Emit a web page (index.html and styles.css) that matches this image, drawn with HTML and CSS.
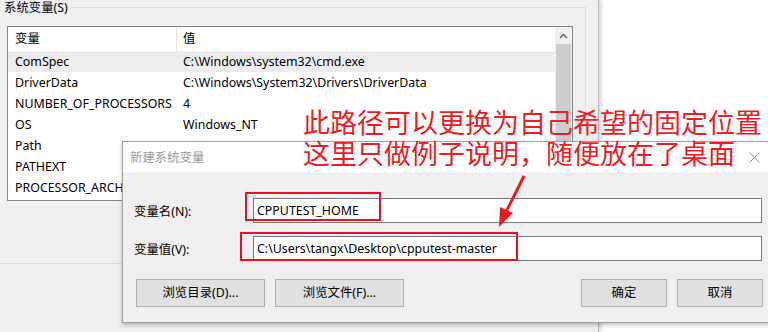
FILE: index.html
```html
<!DOCTYPE html>
<html lang="zh-CN">
<head>
<meta charset="utf-8">
<title>系统变量</title>
<link rel="stylesheet" href="styles.css">
</head>
<body>
<div class="screen">
  <div class="win">
    <div class="group">
      <div class="legend">系统变量(S)</div>
      <div class="list">
        <div class="table">
          <div class="row head"><div class="c1">变量</div><div class="sep"></div><div class="c2">值</div></div>
          <div class="row sel"><div class="c1">ComSpec</div><div class="c2 v">C:\Windows\system32\cmd.exe</div></div>
          <div class="row"><div class="c1">DriverData</div><div class="c2 v">C:\Windows\System32\Drivers\DriverData</div></div>
          <div class="row"><div class="c1">NUMBER_OF_PROCESSORS</div><div class="c2 v">4</div></div>
          <div class="row"><div class="c1">OS</div><div class="c2 v">Windows_NT</div></div>
          <div class="row"><div class="c1">Path</div><div class="c2 v"></div></div>
          <div class="row"><div class="c1">PATHEXT</div><div class="c2 v"></div></div>
          <div class="row"><div class="c1">PROCESSOR_ARCHITECTURE</div><div class="c2 v"></div></div>
        </div>
        <div class="scroll">
          <div class="sb-up"><svg width="9" height="6" viewBox="0 0 9 6"><path d="M1 5 L4.5 1.5 L8 5" fill="none" stroke="#606060" stroke-width="1.4"/></svg></div>
          <div class="sb-thumb"></div>
        </div>
      </div>
    </div>
  </div>

  <div class="dialog">
    <div class="titlebar">
      <span class="title">新建系统变量</span>
      <svg class="close" width="11" height="11" viewBox="0 0 11 11"><path d="M0.5 0.5 L10.5 10.5 M10.5 0.5 L0.5 10.5" stroke="#8a8a8a" stroke-width="1"/></svg>
    </div>
    <div class="dbody">
      <div class="frow"><label class="flabel">变量名(N):</label><div class="input">CPPUTEST_HOME</div></div>
      <div class="frow"><label class="flabel">变量值(V):</label><div class="input">C:\Users\tangx\Desktop\cpputest-master</div></div>
      <div class="btns">
        <div class="bgroup"><div class="btn wide">浏览目录(D)...</div><div class="btn wide">浏览文件(F)...</div></div>
        <div class="bgroup"><div class="btn">确定</div><div class="btn">取消</div></div>
      </div>
      <div class="grip"></div>
    </div>
  </div>

  <div class="mark mark1"></div>
  <div class="mark mark2"></div>

  <div class="note">此路径可以更换为自己希望的固定位置<br>这里只做例子说明，随便放在了桌面</div>

  <svg class="arrow" width="768" height="332" viewBox="0 0 768 332">
    <line x1="524" y1="176" x2="505" y2="214" stroke="#ec1c24" stroke-width="3"/>
    <polygon points="499,227 513,213 500,207" fill="#ec1c24"/>
  </svg>
</div>
</body>
</html>
```
FILE: styles.css
```css
* { box-sizing: border-box; }
html, body { margin: 0; padding: 0; }
body {
  width: 768px; height: 332px; overflow: hidden;
  background: #ffffff;
  font-family: "Noto Sans", "Noto Sans CJK SC", sans-serif;
  font-size: 12.4px;
  color: #000;
}
.screen { position: relative; width: 768px; height: 332px; overflow: hidden; }

.win {
  width: 599px; height: 332px;
  background: #f0f0f0;
  border-right: 1px solid #b9b9b9;
  box-shadow: 2px 0 4px rgba(0,0,0,0.18);
  overflow: hidden;
}
.group {
  margin: 7px 0 0 -3px;
  width: 589px; height: 257px;
  border: 1px solid #dcdcdc;
}
.legend {
  width: fit-content;
  height: 14px; line-height: 15px;
  margin: -8px 0 0 3px;
  padding: 0 3px;
  background: #f0f0f0;
  color: #000;
}
.list {
  margin: 12px 0 0 9px;
  width: 566px; height: 175px;
  border: 1px solid #828790;
  background: #fff;
  display: flex;
}
.table { flex: 1; overflow: hidden; }
.row { display: flex; height: 21px; line-height: 22px; white-space: nowrap; }
.row.head { height: 24px; line-height: 24px; }
.row.sel { background: #ededed; }
.c1 { width: 168px; padding-left: 7px; overflow: hidden; }
.sep { width: 1px; background: #e5e5e5; }
.c2 { padding-left: 6px; }
.c2.v { padding-left: 7px; }
.scroll { width: 17px; background: #f0f0f0; display: flex; flex-direction: column; }
.sb-up { height: 17px; display: flex; align-items: center; justify-content: center; background: #f0f0f0; }
.sb-thumb { margin: 0 1px 0 1px; height: 120px; background: #cdcdcd; }

.dialog {
  position: absolute; left: 122px; top: 141px;
  width: 650px; height: 182px;
  border: 1px solid #a0a0a0;
  background: #f0f0f0;
  box-shadow: 0 2px 4px rgba(0,0,0,0.25);
  display: flex; flex-direction: column;
}
.titlebar {
  height: 30px; background: #fff;
  display: flex; align-items: center; justify-content: space-between;
  padding: 0 11px 0 7px;
}
.title { color: #9a9a9a; }
.close { margin-right: 0; }
.dbody { flex: 1; padding: 26px 0 0 11px; position: relative; }
.frow { display: flex; align-items: center; height: 25px; margin-bottom: 13px; }
.flabel { width: 119px; }
.input {
  width: 509px; height: 25px;
  border: 1px solid #7a7a7a; background: #fff;
  padding-left: 3px; line-height: 23px; white-space: nowrap;
}
.btns { display: flex; justify-content: space-between; width: 627px; margin: 18px 0 0 2px; }
.bgroup { display: flex; gap: 10px; }
.btn {
  width: 86px; height: 28px; line-height: 26px; text-align: center;
  border: 1px solid #adadad; background: #e1e1e1;
}
.btn.wide { width: 129px; }
.grip {
  position: absolute; right: 7px; bottom: 3px; width: 6px; height: 6px;
  background:
    radial-gradient(circle, #b0b0b0 45%, transparent 50%) 4px 4px/2px 2px no-repeat,
    radial-gradient(circle, #b0b0b0 45%, transparent 50%) 1px 4px/2px 2px no-repeat,
    radial-gradient(circle, #b0b0b0 45%, transparent 50%) 4px 1px/2px 2px no-repeat;
}

.mark { position: absolute; border: 2px solid #e81123; }
.mark1 { left: 245px; top: 192px; width: 136px; height: 29px; }
.mark2 { left: 240px; top: 232px; width: 278px; height: 29px; }

.note {
  position: absolute; left: 303px; top: 106px;
  font-family: "Noto Sans CJK SC", sans-serif;
  font-size: 27px; line-height: 31px;
  color: #ee1c25;
  white-space: nowrap;
}
.arrow { position: absolute; left: 0; top: 0; }
```
